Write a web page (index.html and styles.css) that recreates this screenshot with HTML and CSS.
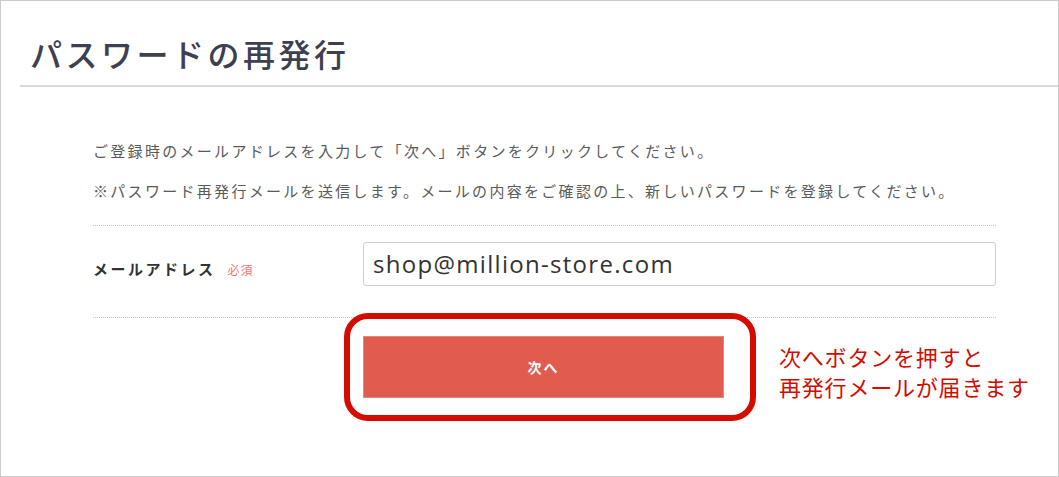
FILE: index.html
```html
<!DOCTYPE html>
<html lang="ja">
<head>
<meta charset="utf-8">
<title>パスワードの再発行</title>
<link rel="stylesheet" href="styles.css">
</head>
<body>
<div class="frame">
  <header class="page-head">
    <h1 class="page-title">パスワードの再発行</h1>
  </header>
  <main class="content">
    <div class="intro">
      <p>ご登録時のメールアドレスを入力して「次へ」ボタンをクリックしてください。</p>
      <p>※パスワード再発行メールを送信します。メールの内容をご確認の上、新しいパスワードを登録してください。</p>
    </div>
    <div class="form-row">
      <div class="label">メールアドレス<span class="req">必須</span></div>
      <div class="field"><div class="input">shop@million-store.com</div></div>
    </div>
    <div class="action-row">
      <div class="spacer"></div>
      <div class="btn-wrap">
        <button class="btn">次へ</button>
        <div class="highlight"></div>
      </div>
      <div class="note">次へボタンを押すと<br>再発行メールが届きます</div>
    </div>
  </main>
</div>
</body>
</html>
```
FILE: styles.css
```css
html, body {
  margin: 0;
  padding: 0;
  background: #fff;
}
body {
  font-family: "Noto Sans CJK JP", "Noto Sans", sans-serif;
}
.frame {
  width: 1059px;
  height: 477px;
  box-sizing: border-box;
  border: 1px solid #cccccc;
  overflow: hidden;
}
.page-head {
  margin-left: 19px;
  border-bottom: 2px solid #d9d9d9;
  padding: 36px 0 16px 10px;
}
.page-title {
  margin: 0;
  font-size: 32px;
  line-height: 32px;
  font-weight: 500;
  letter-spacing: 3.5px;
  color: #3e3f4f;
}
.content {
  padding: 0 62px 0 92px;
}
.intro {
  padding-top: 44px;
  padding-bottom: 14px;
  border-bottom: 1px dotted #c4c4c4;
}
.intro p {
  margin: 0;
  font-size: 15px;
  line-height: 40px;
  letter-spacing: 2.3px;
  color: #5a5a5a;
}
.form-row {
  display: flex;
  align-items: center;
  padding: 16px 0 31px;
  border-bottom: 1px dotted #c4c4c4;
}
.label {
  width: 270px;
  flex: none;
  font-size: 15px;
  font-weight: 700;
  letter-spacing: 2.5px;
  color: #333;
  padding-top: 9px;
}
.req {
  margin-left: 12px;
  font-size: 12px;
  font-weight: 400;
  letter-spacing: 1px;
  color: #ea7a70;
}
.field {
  flex: 1;
}
.input {
  height: 44px;
  box-sizing: border-box;
  border: 1px solid #cfcfcf;
  border-radius: 3px;
  padding: 0 9px;
  font-family: "Open Sans", "Noto Sans", sans-serif;
  font-size: 24px;
  line-height: 42px;
  letter-spacing: 1.3px;
  color: #333;
}
.action-row {
  display: flex;
  align-items: flex-start;
  padding-top: 18px;
}
.spacer {
  width: 270px;
  flex: none;
}
.btn-wrap {
  position: relative;
  width: 361px;
  flex: none;
}
.btn {
  display: block;
  width: 361px;
  height: 62px;
  margin: 0;
  border: 1px solid #e8867c;
  background: #e05c4f;
  color: #fff;
  font-family: "Noto Sans CJK JP", sans-serif;
  font-size: 14px;
  font-weight: 700;
  letter-spacing: 2px;
  padding: 0;
}
.highlight {
  position: absolute;
  left: -19px;
  top: -23px;
  width: 412px;
  height: 108px;
  box-sizing: border-box;
  border: 6px solid #d40c00;
  border-radius: 24px;
}
.note {
  margin-left: 55px;
  margin-top: 5px;
  font-size: 22px;
  line-height: 30px;
  letter-spacing: 0.8px;
  color: #d40c00;
  white-space: nowrap;
}
```
